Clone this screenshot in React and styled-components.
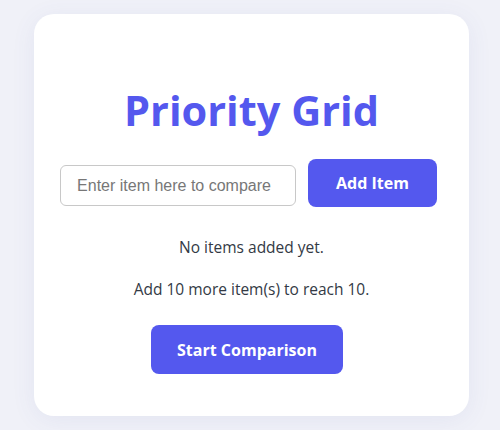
import React, { useState } from "react";
import styled, { createGlobalStyle } from "styled-components";

const Global = createGlobalStyle`
  html, body { margin: 0; padding: 0; background: #f0f1f8; }
  body { font-family: "Open Sans", "Noto Sans", sans-serif; }
`;

const Page = styled.div`
  padding: 14px 31px 15px 34px;
  display: flex;
  justify-content: center;
`;

const Card = styled.div`
  width: 435px;
  box-sizing: border-box;
  background: #ffffff;
  border-radius: 20px;
  box-shadow: 0 4px 24px rgba(80, 86, 160, 0.08);
  padding: 69px 24px 42px;
  display: flex;
  flex-direction: column;
  align-items: center;
`;

const Title = styled.h1`
  margin: 0 0 22px;
  font-size: 41.5px;
  line-height: 54px;
  font-weight: 700;
  color: #5458ee;
`;

const Row = styled.div`
  display: flex;
  align-items: flex-end;
  gap: 12px;
  margin-right: 6px;
`;

const Input = styled.input`
  width: 236px;
  height: 41px;
  margin-bottom: 1px;
  box-sizing: border-box;
  padding: 0 16px;
  border: 1px solid #c8c8c8;
  border-radius: 6px;
  font-family: "Liberation Sans", Arial, sans-serif;
  font-size: 16px;
  color: #333;
  &::placeholder { color: #777; }
`;

const Button = styled.button`
  height: ${(p) => p.$h || 48}px;
  padding: 0 ${(p) => p.$px || 28}px;
  border: none;
  border-radius: 8px;
  background: #5458ee;
  color: #fff;
  font-family: "Open Sans", sans-serif;
  font-weight: 700;
  font-size: 16px;
  cursor: pointer;
`;

const Text = styled.p`
  margin: ${(p) => p.$mt}px 0 0;
  font-size: 15.5px;
  line-height: 20px;
  color: #333a45;
`;

const Bottom = styled.div`
  margin-top: 26px;
  margin-right: 9px;
`;

export default function App() {
  const [value, setValue] = useState("");
  return (
    <>
      <Global />
      <Page>
        <Card>
          <Title>Priority Grid</Title>
          <Row>
            <Input
              placeholder="Enter item here to compare"
              value={value}
              onChange={(e) => setValue(e.target.value)}
            />
            <Button>Add Item</Button>
          </Row>
          <Text $mt={30}>No items added yet.</Text>
          <Text $mt={22}>Add 10 more item(s) to reach 10.</Text>
          <Bottom>
            <Button $h={49} $px={26}>Start Comparison</Button>
          </Bottom>
        </Card>
      </Page>
    </>
  );
}
